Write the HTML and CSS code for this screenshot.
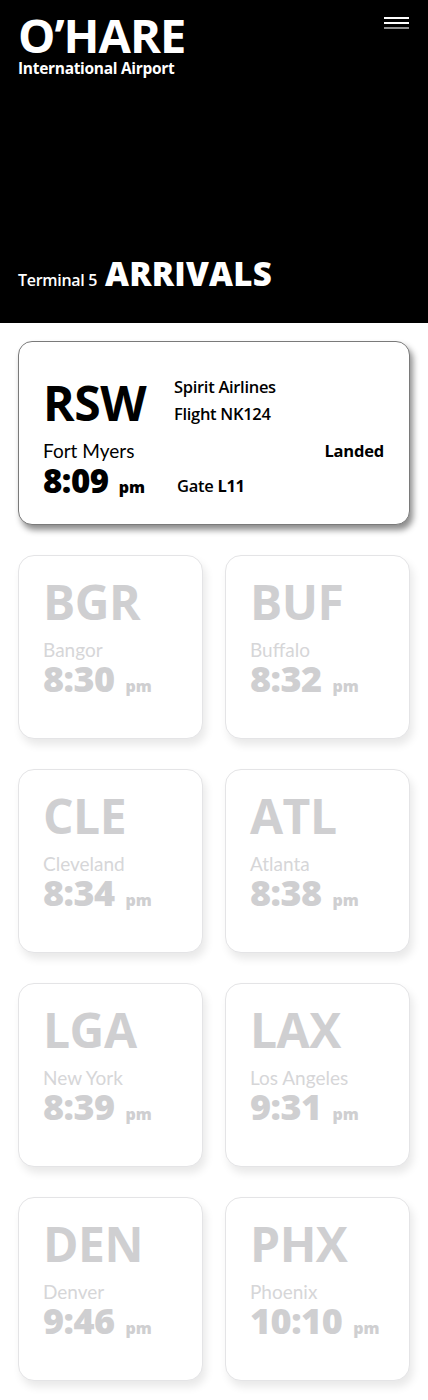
FILE: index.html
```html
<!DOCTYPE html>
<html lang="en">
<head>
    <meta charset="UTF-8">
    <meta name="viewport" content="width=device-width, initial-scale=1.0">
    <title>O'Hare Arrivals</title>
    <link rel="stylesheet" href="styles.css">
</head>
<body>
    <header class="board-header">
        <div class="header-top">
            <div class="airport">
                <h1 class="airport-name">O’HARE</h1>
                <div class="airport-sub">International Airport</div>
            </div>
            <button class="menu-btn" aria-label="Menu">
                <span></span>
                <span></span>
                <span class="last"></span>
            </button>
        </div>
        <div class="header-bottom">
            <span class="terminal">Terminal 5</span>
            <span class="board-title">ARRIVALS</span>
        </div>
    </header>

    <main class="board">
        <div class="flight-card featured">
            <div class="code">RSW</div>
            <div class="info">
                <div>Spirit Airlines</div>
                <div>Flight NK124</div>
            </div>
            <div class="city">Fort Myers</div>
            <div class="status">Landed</div>
            <div class="time">8:09 <span class="ampm">pm</span></div>
            <div class="gate">Gate <b>L11</b></div>
        </div>

        <div class="flight-grid">
            <div class="flight-card">
                <div class="code">BGR</div>
                <div class="city">Bangor</div>
                <div class="time">8:30 <span class="ampm">pm</span></div>
            </div>
            <div class="flight-card">
                <div class="code">BUF</div>
                <div class="city">Buffalo</div>
                <div class="time">8:32 <span class="ampm">pm</span></div>
            </div>
            <div class="flight-card">
                <div class="code">CLE</div>
                <div class="city">Cleveland</div>
                <div class="time">8:34 <span class="ampm">pm</span></div>
            </div>
            <div class="flight-card">
                <div class="code">ATL</div>
                <div class="city">Atlanta</div>
                <div class="time">8:38 <span class="ampm">pm</span></div>
            </div>
            <div class="flight-card">
                <div class="code">LGA</div>
                <div class="city">New York</div>
                <div class="time">8:39 <span class="ampm">pm</span></div>
            </div>
            <div class="flight-card">
                <div class="code">LAX</div>
                <div class="city">Los Angeles</div>
                <div class="time">9:31 <span class="ampm">pm</span></div>
            </div>
            <div class="flight-card">
                <div class="code">DEN</div>
                <div class="city">Denver</div>
                <div class="time">9:46 <span class="ampm">pm</span></div>
            </div>
            <div class="flight-card">
                <div class="code">PHX</div>
                <div class="city">Phoenix</div>
                <div class="time">10:10 <span class="ampm">pm</span></div>
            </div>
        </div>
    </main>
</body>
</html>
```

FILE: styles.css
```css
:root {
    --ink: #000000;
    --paper: #ffffff;
    --muted: #cfcfd1;
    --muted-light: #d6d6d8;
    --card-border: #e4e4e6;
    --heading-font: 'Open Sans', 'DejaVu Sans', sans-serif;
    --body-font: Lato, 'Open Sans', sans-serif;
}

* {
    margin: 0;
    padding: 0;
    box-sizing: border-box;
}

body {
    background: var(--paper);
    font-family: var(--heading-font);
    color: var(--ink);
}

/* header */

.board-header {
    background: var(--ink);
    color: var(--paper);
    height: 323px;
    padding: 10px 18px 32px;
    display: flex;
    flex-direction: column;
    justify-content: space-between;
}

.header-top {
    display: flex;
    justify-content: space-between;
    align-items: flex-start;
}

.airport-name {
    font-size: 47px;
    font-weight: 700;
    line-height: 1;
    letter-spacing: -1px;
    margin-top: 2px;
}

.airport-sub {
    font-size: 15.5px;
    font-weight: 700;
    line-height: 1.1;
    letter-spacing: -0.3px;
    margin-top: 1px;
}

.menu-btn {
    background: none;
    border: none;
    width: 25px;
    display: flex;
    flex-direction: column;
    gap: 3px;
    margin-top: 7px;
    margin-right: 1px;
    cursor: pointer;
}

.menu-btn span {
    display: block;
    height: 2px;
    background: var(--paper);
}

.menu-btn span.last {
    background: #8f8f8f;
}

.header-bottom {
    display: flex;
    align-items: baseline;
    gap: 8px;
}

.terminal {
    font-size: 16px;
    font-weight: 600;
    letter-spacing: -0.3px;
}

.board-title {
    font-size: 33px;
    font-weight: 800;
    line-height: 1;
    letter-spacing: 0.2px;
}

/* cards */

.board {
    padding: 18px 18px 19px;
}

.flight-card {
    border: 1px solid var(--card-border);
    border-radius: 16px;
    height: 184px;
    padding: 22px 24px;
    background: var(--paper);
    box-shadow: 3px 6px 8px rgba(0, 0, 0, 0.09);
    color: var(--muted);
}

.flight-card .code {
    font-size: 48px;
    font-weight: 700;
    line-height: 1;
    letter-spacing: -0.5px;
}

.flight-card .city {
    font-family: var(--body-font);
    font-size: 19px;
    font-weight: 400;
    color: var(--muted-light);
    margin-top: 13px;
    line-height: 22px;
}

.flight-card .time {
    font-size: 36px;
    font-weight: 800;
    line-height: 1;
    letter-spacing: -0.5px;
}

.flight-card .ampm {
    font-size: 16px;
    font-weight: 800;
    letter-spacing: 0;
    margin-left: 2px;
}

.flight-grid {
    display: grid;
    grid-template-columns: 1fr 1fr;
    column-gap: 22px;
    row-gap: 30px;
}

/* featured arrival */

.featured {
    color: var(--ink);
    border: 1px solid #7a7a7a;
    border-radius: 14px;
    box-shadow: 3px 5px 6px rgba(0, 0, 0, 0.45);
    margin-bottom: 30px;
    padding: 31px 25px 0 24px;
    display: grid;
    grid-template-columns: 134px 1fr auto;
    grid-template-areas:
        "code info info"
        "city . status"
        "time gate .";
    align-content: start;
}

.featured .code {
    grid-area: code;
    align-self: center;
    padding-top: 6px;
}

.featured .info {
    grid-area: info;
    font-size: 16.5px;
    font-weight: 600;
    line-height: 27px;
    letter-spacing: -0.3px;
    margin-left: -3px;
}

.featured .city {
    grid-area: city;
    color: var(--ink);
    margin-top: 13px;
}

.featured .status {
    grid-area: status;
    align-self: end;
    font-size: 16.5px;
    font-weight: 700;
    letter-spacing: -0.2px;
}

.featured .time {
    grid-area: time;
    font-size: 33px;
    white-space: nowrap;
    margin-top: 2px;
}

.featured .gate {
    grid-area: gate;
    align-self: end;
    font-size: 16.5px;
    font-weight: 600;
    letter-spacing: -0.3px;
}

.featured .gate b {
    font-weight: 700;
}
```
